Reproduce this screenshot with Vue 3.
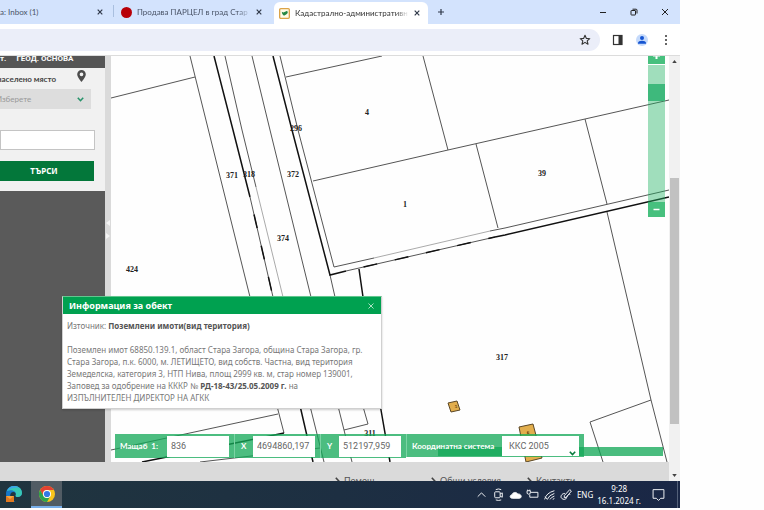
<script setup>
import { ref } from 'vue'

const tabs = [
  { id: 1, title: 'a: Inbox (1)', icon: null, active: false },
  { id: 2, title: 'Продава ПАРЦЕЛ в град Стар', icon: 'red', active: false },
  { id: 3, title: 'Кадастрално-административн', icon: 'map', active: true }
]

const thin = [
  '111,98 195,77',
  '190,56 250,297 278,410 284,433',
  '111,450 278,414',
  '200,462 320,448',
  '225,56 242,130 256,187',
  '283,297 311,410 324,462',
  '252,56 270,130 311,297 339,410 352,462',
  '280,56 298,130 334,267 374,258',
  '490,231 505,228 669,190',
  '330,275 335,297 364,410 368,424 344,430',
  '286,77 382,56',
  '423,56 448,150',
  '313,181 448,150 669,100',
  '476,144 498,228',
  '585,119 607,204',
  '607,212 651,400 667,462',
  '651,400 590,422 603,462'
]
const faint = ['256,187 283,297', '374,258 490,231']
const thick = [
  '214,56 233,130 250,197',
  '273,297 301,410 313,462',
  '273,56 292,130 330,275 346,271',
  '495,237 505,235 669,197',
  '359,269 363,297 381,410 390,462',
  '142,462 167,457 284,433'
]
const dashed = ['250,197 273,297', '346,271 495,237']
const buildings = ['448,403 457,401 460,410 451,412', '519,427 533,424 542,458 526,462']
const labels = [
  { t: '4', x: 367, y: 115 },
  { t: '296', x: 296, y: 131 },
  { t: '371', x: 232, y: 178 },
  { t: '318', x: 249, y: 177 },
  { t: '372', x: 293, y: 177 },
  { t: '39', x: 542, y: 176 },
  { t: '1', x: 405, y: 207 },
  { t: '374', x: 283, y: 241 },
  { t: '424', x: 132, y: 272 },
  { t: '317', x: 502, y: 360 },
  { t: '311', x: 370, y: 436 }
]

const place = ref('')
const query = ref('')
const zoomLevel = ref(100)
const scale = ref('836')
const coordX = ref('4694860,197')
const coordY = ref('512197,959')
const system = ref('ККС 2005')
const popupOpen = ref(true)
</script>

<template>
  <div class="desktop" lang="bg">
    <header class="tabstrip">
      <div v-for="tab in tabs" :key="tab.id" class="tab" :class="['tab-' + tab.id, { active: tab.active }]">
        <span v-if="tab.icon === 'red'" class="dot"></span>
        <svg v-if="tab.icon === 'map'" class="favicon" viewBox="0 0 10 10" aria-hidden="true">
          <rect x=".6" y=".6" width="8.8" height="8.8" rx="1" fill="#fffbe8" stroke="#dba348" stroke-width="1.2" />
          <path d="M2.500 3.500 4 4l3.500-1.500.5 2L6.500 6 4.500 7 3 5.500Z" fill="#278845" />
        </svg>
        <span class="tab-title">{{ tab.title }}</span>
        <button class="icon-btn" aria-label="Затвори раздела">
          <svg width="6" height="6" viewBox="0 0 6 6"><path d="M.7.7 5.300 5.300M5.300.7.7 5.300" stroke="#30394a" stroke-width="1.200" /></svg>
        </button>
      </div>
      <button class="icon-btn new-tab" aria-label="Нов раздел">
        <svg width="8" height="8" viewBox="0 0 8 8"><path d="M4 1v6M1 4h6" stroke="#30394a" stroke-width="1.200" /></svg>
      </button>
      <div class="window-controls">
        <button class="icon-btn" aria-label="Минимизиране">
          <svg width="8" height="8" viewBox="0 0 8 8"><path d="M1 4.500h6" stroke="#222" /></svg>
        </button>
        <button class="icon-btn" aria-label="Възстановяване">
          <svg width="8" height="8" viewBox="0 0 8 8" fill="none" stroke="#222"><rect x="1" y="2.500" width="4.500" height="4.500" rx=".5" /><path d="M2.500 1.200h3.500q1 0 1 1v3.300" /></svg>
        </button>
        <button class="icon-btn" aria-label="Затвори">
          <svg width="8" height="8" viewBox="0 0 8 8"><path d="m1 1 6 6M7 1 1 7" stroke="#222" /></svg>
        </button>
      </div>
    </header>

    <div class="toolbar">
      <div class="address">
        <button class="icon-btn" aria-label="Отметка">
          <svg width="12" height="12" viewBox="0 0 12 12"><path d="m6 1.300 1.400 3.100 3.400.3-2.600 2.200.8 3.300-3-1.800-3 1.800.8-3.300L1.200 4.700l3.400-.3Z" fill="none" stroke="#333" stroke-width="1.100" stroke-linejoin="round" /></svg>
        </button>
      </div>
      <div class="actions">
        <button class="icon-btn" aria-label="Страничен панел">
          <svg width="12" height="12" viewBox="0 0 12 12"><rect x="1.500" y="1.500" width="8.500" height="9" fill="none" stroke="#333" stroke-width="1.200" /><path d="M6.500 1.500h3.500v9H6.500Z" fill="#333" /></svg>
        </button>
        <button class="icon-btn" aria-label="Профил">
          <svg width="12" height="12" viewBox="0 0 12 12"><circle cx="6" cy="6" r="6" fill="#c5dafb" /><circle cx="6" cy="4" r="2" fill="#1554d1" /><path d="M2 9.700V9c0-1.500 2-2.300 4-2.300s4 .8 4 2.300v.7Z" fill="#1554d1" /></svg>
        </button>
        <button class="icon-btn" aria-label="Меню">
          <svg width="12" height="12" viewBox="0 0 12 12" fill="#333"><circle cx="6" cy="2" r="1" /><circle cx="6" cy="6" r="1" /><circle cx="6" cy="10" r="1" /></svg>
        </button>
      </div>
    </div>

    <div class="page">
      <div class="page-content">
        <main class="workspace">
          <aside class="sidebar">
            <nav class="side-nav"><a href="#">т.</a><a href="#">ГЕОД. ОСНОВА</a></nav>
            <form class="search" @submit.prevent>
              <div class="label-row">
                <label for="place">населено място</label>
                <svg width="9" height="12" viewBox="0 0 9 12"><path d="M4.500 0A4.300 4.300 0 0 0 .2 4.300C.2 7.300 4.500 12 4.500 12s4.300-4.700 4.300-7.700A4.300 4.300 0 0 0 4.500 0Zm0 2.500a1.800 1.800 0 1 1 0 3.700 1.800 1.800 0 0 1 0-3.700Z" fill="#4c4c4c" fill-rule="evenodd" /></svg>
              </div>
              <div class="select-wrap">
                <select id="place" v-model="place"><option value="">Изберете</option></select>
                <svg width="7" height="5" viewBox="0 0 7 5"><path d="m.8.8 2.700 2.900L6.200.8" fill="none" stroke="#27936a" stroke-width="1.600" /></svg>
              </div>
              <input v-model="query" type="text" aria-label="Търсене" />
              <button type="submit">ТЪРСИ</button>
            </form>
          </aside>
          <div class="splitter">
            <svg width="4" height="20" viewBox="0 0 4 20"><path d="M4 1v6L0 4ZM0 14v6l4-3Z" fill="#f5f5f5" /></svg>
          </div>
          <section class="map">
            <svg class="canvas" viewBox="111 56 558 406" preserveAspectRatio="xMinYMin slice">
              <polygon v-for="b in buildings" :key="b" :points="b" class="building" />
              <polyline v-for="l in thin" :key="l" :points="l" class="thin" />
              <polyline v-for="l in faint" :key="l" :points="l" class="thin faint" />
              <polyline v-for="l in thick" :key="l" :points="l" class="thick" />
              <polyline v-for="l in dashed" :key="l" :points="l" class="thin" />
              <polyline v-for="l in dashed" :key="'d' + l" :points="l" class="thick dashes" />
              <text v-for="n in labels" :key="n.t" :x="n.x" :y="n.y" class="parcel">{{ n.t }}</text>
              <text x="456" y="408" class="tiny">5</text>
              <text x="528" y="434" class="tiny">6</text>
            </svg>
            <div class="zoom">
              <button class="plus" aria-label="Увеличи"><svg width="7" height="7" viewBox="0 0 7 7"><path d="M3.500 0v7M0 3.500h7" stroke="#fff" stroke-width="2" /></svg></button>
              <input v-model="zoomLevel" type="range" min="0" max="119" aria-label="Мащабиране" />
              <button class="minus" aria-label="Намали"><svg width="7" height="3" viewBox="0 0 7 3"><path d="M.5 1.500h6" stroke="#fff" stroke-width="1.500" /></svg></button>
            </div>
            <div class="coords">
              <div class="strip"></div>
              <div class="seg seg-scale"><label for="scale">Мащаб&nbsp; 1:</label><input id="scale" v-model="scale" type="text" /></div>
              <div class="seg"><label for="cx">X</label><input id="cx" v-model="coordX" type="text" /></div>
              <div class="seg"><label for="cy">Y</label><input id="cy" v-model="coordY" type="text" /></div>
              <div class="seg seg-system">
                <label for="sys">Координатна система</label>
                <div class="select-wrap">
                  <select id="sys" v-model="system"><option>ККС 2005</option></select>
                  <svg width="7" height="5" viewBox="0 0 7 5"><path d="m.8.8 2.700 2.700L6.200.8" fill="none" stroke="#087b3d" stroke-width="1.600" /></svg>
                </div>
              </div>
            </div>
          </section>
          <section v-if="popupOpen" class="popup">
            <header>
              <h2>Информация за обект</h2>
              <button class="icon-btn" aria-label="Затвори" @click="popupOpen = false">
                <svg width="6" height="6" viewBox="0 0 6 6"><path d="m.5.5 5 5m0-5-5 5" stroke="#d8f2e2" stroke-width=".8" /></svg>
              </button>
            </header>
            <div class="popup-body">
              <p>Източник: <b>Поземлени имоти(вид територия)</b></p>
              <p>
                Поземлен имот 68850.139.1, област Стара Загора, община Стара Загора, гр.<br />
                Стара Загора, п.к. 6000, м. ЛЕТИЩЕТО, вид собств. Частна, вид територия<br />
                Земеделска, категория 3, НТП Нива, площ 2999 кв. м, стар номер 139001,<br />
                Заповед за одобрение на КККР № <b>РД-18-43/25.05.2009 г.</b> на<br />
                ИЗПЪЛНИТЕЛЕН ДИРЕКТОР НА АГКК
              </p>
            </div>
          </section>
        </main>
        <footer class="site-footer">
          <a v-for="link in ['Помощ', 'Общи условия', 'Контакти']" :key="link" href="#">
            <svg width="5" height="8" viewBox="0 0 5 8"><path d="m.8.8 3 3.200-3 3.200" fill="none" stroke="#444" stroke-width="1.600" /></svg>{{ link }}
          </a>
        </footer>
      </div>
      <div class="scrollbar">
        <svg width="5" height="3" viewBox="0 0 6 4"><path d="M0 4 3 0l3 4Z" fill="#444" /></svg>
        <div class="track"><div class="thumb"></div></div>
        <svg width="5" height="3" viewBox="0 0 6 4"><path d="m0 0 3 4 3-4Z" fill="#444" /></svg>
      </div>
    </div>

    <div class="taskbar">
      <button class="app" aria-label="Edge">
        <svg width="18" height="18" viewBox="0 0 18 18">
          <path d="M1 9C1 4 4.500 1 9 1s8 3 8 7c0 2.500-2 4-4.300 4-1.700 0-2.500-.8-2-1.800.5-1.200 0-3.200-2.200-3.200C5 7 4.500 11 6 13.500S10 17 12 16.500C6 18.500 1 14 1 9Z" fill="#1678c8" />
          <path d="M2 6C3.300 2.800 6 1 9.300 1 14 1 17 4 17 8c0 2.500-2 4-4.300 4-1.700 0-2.500-.8-2-1.800C12 7 8 4 2 6Z" fill="#38c8b5" />
          <path d="M2 6C3.300 2.800 6 1 9.300 1c2 0 3.700.6 5 1.700C10 2 6 3 2 6Z" fill="#3ca7e8" />
          <path d="M1 11h8v6H1Z" fill="#e17920" /><path d="M1 11h8l-4 3Z" fill="#f5a540" />
        </svg>
      </button>
      <button class="app current" aria-label="Chrome">
        <svg width="18" height="18" viewBox="0 0 18 18">
          <circle cx="9" cy="9" r="8" fill="#f8c51b" />
          <path d="M2.070 5A8 8 0 0 1 15.930 5H9A4 4 0 0 0 5.540 11Z" fill="#e34133" />
          <path d="M2.070 5A8 8 0 0 0 9 17L12.460 11A4 4 0 0 1 5.540 11Z" fill="#2da24e" />
          <circle cx="9" cy="9" r="4" fill="#fff" /><circle cx="9" cy="9" r="3.100" fill="#3479e5" />
        </svg>
      </button>
      <div class="tray">
        <svg viewBox="0 0 12 12"><path d="m2.500 8 3.500-3.500L9.500 8" /></svg>
        <svg viewBox="0 0 12 12"><rect x="2.500" y="3.500" width="5" height="5.500" rx=".8" /><path d="M7.500 5.500 9.500 4.500v4l-2-1M3.500 1.500q2.500-1.200 5 0M3.500 11q2.500 1 5 0" /></svg>
        <svg viewBox="0 0 12 12"><path d="M3 9.500C.5 9.500.5 6.500 2.800 6.300 3.500 3.500 7 3.500 8 5.500c2.500-.2 3.500 1.500 3.200 2.800-.2.800-.9 1.200-1.700 1.200Z" fill="#fff" /></svg>
        <svg viewBox="0 0 12 12"><path d="M4.500 4h6.500v4.500H3.500V6M1 2.500h3V5q-1.500 1.500-3 0ZM1.500 1.500v1M3.500 1.500v1" /></svg>
        <svg viewBox="0 0 12 12"><path d="M1.500 10.500q1.500-6 9-8M4 10.500Q5.500 6.500 10.500 5M6.500 10.500Q7.500 8.500 10.500 7.500M9 10.500l1.500-.8M2 8l2 2.500" /></svg>
        <svg viewBox="0 0 12 12"><path d="m4 7 5-5.500 1.500 1.300L6 8.500l-2 .5ZM4.500 5C1.500 5 0 8 1.500 9.500S5.500 11 6 9s2-4 3.500-3" /></svg>
        <span class="lang">ENG</span>
        <span class="clock"><time>9:28</time><time>16.1.2024 г.</time></span>
        <svg class="note" viewBox="0 0 12 12"><path d="M1 1.500h10v8H8L6 11.500l-2-2H1Z" /></svg>
      </div>
    </div>
  </div>
</template>

<style>
body { margin: 0; background: #fefefe; }
</style>

<style scoped>
* { box-sizing: border-box; }
.desktop { display: flex; flex-direction: column; min-height: 100vh; padding: 0 84px 2px 0; overflow: hidden; font: 8px/12px Lato, "Noto Sans", sans-serif; color: #555; }
button, input, select { font: inherit; margin: 0; padding: 0; border: 0; border-radius: 0; appearance: none; outline: 0; }
button { background: none; }
svg { display: block; flex: none; }
a { color: inherit; text-decoration: none; }
.icon-btn { display: grid; place-items: center; flex: none; }

.tabstrip { display: flex; height: 24px; background: #d3e3fd; }
.tab { display: flex; align-items: center; gap: 5px; min-width: 0; color: #4b5568; height: 24px; white-space: nowrap; }
.tab-title { flex: 1; min-width: 0; overflow: hidden; mask-image: linear-gradient(90deg, #000 88%, transparent); }
.tab-1 { flex: 0 0 114px; padding-right: 10px; border-right: 1px solid #a9bfdf; border-image: linear-gradient(transparent 25%, #a9bfdf 25% 70%, transparent 70%) 1; }
.tab-1 .tab-title { mask-image: none; }
.tab-2 { flex: 0 0 160px; padding: 0 12px 0 7px; }
.tab-3 { flex: 0 0 154px; padding: 0 8px 2px 5px; margin-top: 2px; }
.tab.active { background: #fff; border-radius: 6px 6px 0 0; color: #333; }
.dot { flex: none; width: 11px; height: 11px; border-radius: 50%; background: #b80008; }
.favicon { width: 11px; height: 11px; }
.new-tab { margin-left: 9px; }
.window-controls { display: flex; gap: 23px; margin-left: auto; padding-right: 11px; }

.toolbar { display: flex; align-items: center; height: 32px; background: #fff; border-bottom: 1px solid #dcdcdc; }
.address { display: flex; flex: 1; justify-content: flex-end; height: 22px; padding-right: 9px; background: #ebeef9; border-radius: 0 11px 11px 0; }
.actions { display: flex; gap: 12px; padding: 0 8px 0 12px; }

.page { display: flex; flex: 1; }
.page-content { display: flex; flex: 1; min-width: 0; flex-direction: column; }
.workspace { position: relative; display: flex; flex: 1; overflow: hidden; }
.sidebar { width: 105px; background: #5a5a5a; overflow: hidden; }
.side-nav { display: flex; gap: 10px; height: 12px; overflow: hidden; color: #fff; background: #555; font-family: Roboto, sans-serif; font-weight: 700; line-height: 6px; white-space: nowrap; }
.search { display: flex; flex-direction: column; height: 123px; background: #f1f1f1; }
.label-row { display: flex; justify-content: space-between; height: 21px; padding: 2px 19px 0 0; }
.label-row label { margin-left: -3px; padding-top: 3px; font-weight: 700; color: #444; white-space: nowrap; }
.select-wrap { position: relative; }
.select-wrap svg { position: absolute; right: 7px; bottom: 7px; pointer-events: none; }
.search .select-wrap { width: 91px; }
.search select { width: 100%; height: 20px; background: #dddddd; color: #999; text-indent: -4px; }
.search input { width: 95px; height: 20px; margin-top: 21px; background: #fff; border: 1px solid #c4c4c4; }
.search button { width: 94px; height: 20px; margin-top: 11px; padding-right: 6px; background: #03773a; color: #fff; font-family: "Noto Sans", sans-serif; font-weight: 700; }
.splitter { display: grid; place-items: center; flex: none; width: 6px; padding-bottom: 60px; background: #dadada; }

.map { position: relative; flex: 1; background: #fefefe; overflow: hidden; }
.canvas { position: absolute; inset: 0; width: 100%; height: 100%; }
.thin { fill: none; stroke: #555; stroke-width: 1; }
.faint { stroke: #aaa; }
.thick { fill: none; stroke: #111; stroke-width: 1.500; }
.dashes { stroke-dasharray: 14 18; stroke-dashoffset: 14; }
.building { fill: #e2ae4d; stroke: #5b4726; stroke-width: 1; }
.parcel { font: 700 8px "Liberation Serif", serif; fill: #222; text-anchor: middle; }
.tiny { font: 700 5px "Liberation Serif", serif; fill: #503000; text-anchor: middle; }
.zoom { position: absolute; top: 0; right: 4px; width: 17px; }
.zoom button { display: grid; place-items: center; width: 17px; background: rgba(30, 178, 98, .82); }
.zoom .plus { height: 9px; align-content: end; padding-bottom: 5px; border-bottom: 1px solid #fff; overflow: hidden; }
.zoom .minus { height: 15px; }
.zoom input { display: block; width: 17px; height: 137px; writing-mode: vertical-lr; direction: rtl; background: rgba(30, 178, 98, .42); }
.zoom input::-webkit-slider-thumb { appearance: none; width: 17px; height: 17px; background: #3eb97c; }

.coords { position: absolute; left: 4px; right: 6px; bottom: 4px; display: flex; align-items: flex-start; }
.strip { position: absolute; left: 323px; right: 0; bottom: 2px; height: 9px; background: rgba(13, 165, 83, .75); }
.seg { position: relative; display: flex; align-items: center; justify-content: space-between; flex: 0 0 86px; height: 24px; padding: 0 5px 0 6px; background: rgba(20, 168, 88, .76); border-left: 1px solid #7bd3a4; color: #fff; }
.seg label { font-weight: 700; white-space: nowrap; }
.seg input { width: 62px; height: 21px; padding: 0 4px; background: #fff; color: #666; font: 9px Roboto, sans-serif; }
.seg-scale { flex-basis: 119px; padding-left: 5px; border-left: 0; }
.seg-system { flex-basis: 178px; height: 23px; padding-left: 5px; }
.seg-system select { display: block; width: 77px; height: 20px; padding-left: 7px; background: #fff; color: #666; font: 9px Roboto, sans-serif; }
.seg-system svg { right: 3px; bottom: 0; }

.popup { position: absolute; left: 62px; bottom: 53px; width: 320px; background: #fff; border: 1px solid #d0d0d0; border-top-color: #62c68e; box-shadow: 0 1px 2px rgba(0, 0, 0, .2); color: #777; font-family: "Noto Sans", sans-serif; }
.popup header { display: flex; align-items: center; justify-content: space-between; height: 17px; padding: 0 7px 0 6px; background: #00a150; }
.popup h2 { margin: 0; font-size: 9px; line-height: 17px; color: #fff; }
.popup-body { padding: 6px 4px 4px; white-space: nowrap; }
.popup p { margin: 0 0 12px; }
.popup p:last-child { margin: 0; }
.popup b { color: #555; }

.site-footer { display: grid; grid-template-columns: repeat(3, 96px); height: 19px; padding: 13px 0 0 335px; overflow: hidden; background: #dadada; font-size: 9px; white-space: nowrap; }
.site-footer a { display: flex; align-items: center; gap: 4px; height: 12px; }
.scrollbar { display: flex; flex-direction: column; align-items: center; width: 11px; padding: 4px 0; background: #f1f1f1; }
.track { display: flex; flex: 1; width: 9px; padding: 115px 0 50px; }
.thumb { flex: 1; background: #c1c1c1; }

.taskbar { display: flex; height: 27px; background: linear-gradient(90deg, #20353f, #1d2f42 50%, #1a2746); color: #fff; font-family: "Noto Sans", sans-serif; }
.app { display: grid; place-items: center; width: 31px; padding: 0 0 2px; }
.app:first-child { padding-right: 4px; }
.app.current { background: #515c64; border-bottom: 2px solid #76aeea; padding: 0; }
.tray { display: flex; align-items: center; gap: 4px; margin-left: auto; padding-right: 3px; border-right: 1px solid #536079; margin-right: 2px; }
.tray svg { width: 13px; height: 13px; fill: none; stroke: #f1f3f6; stroke-width: .9; }
.clock { display: flex; flex-direction: column; text-align: center; white-space: nowrap; }
.tray .note { margin: 0 9px 0 7px; }
</style>
